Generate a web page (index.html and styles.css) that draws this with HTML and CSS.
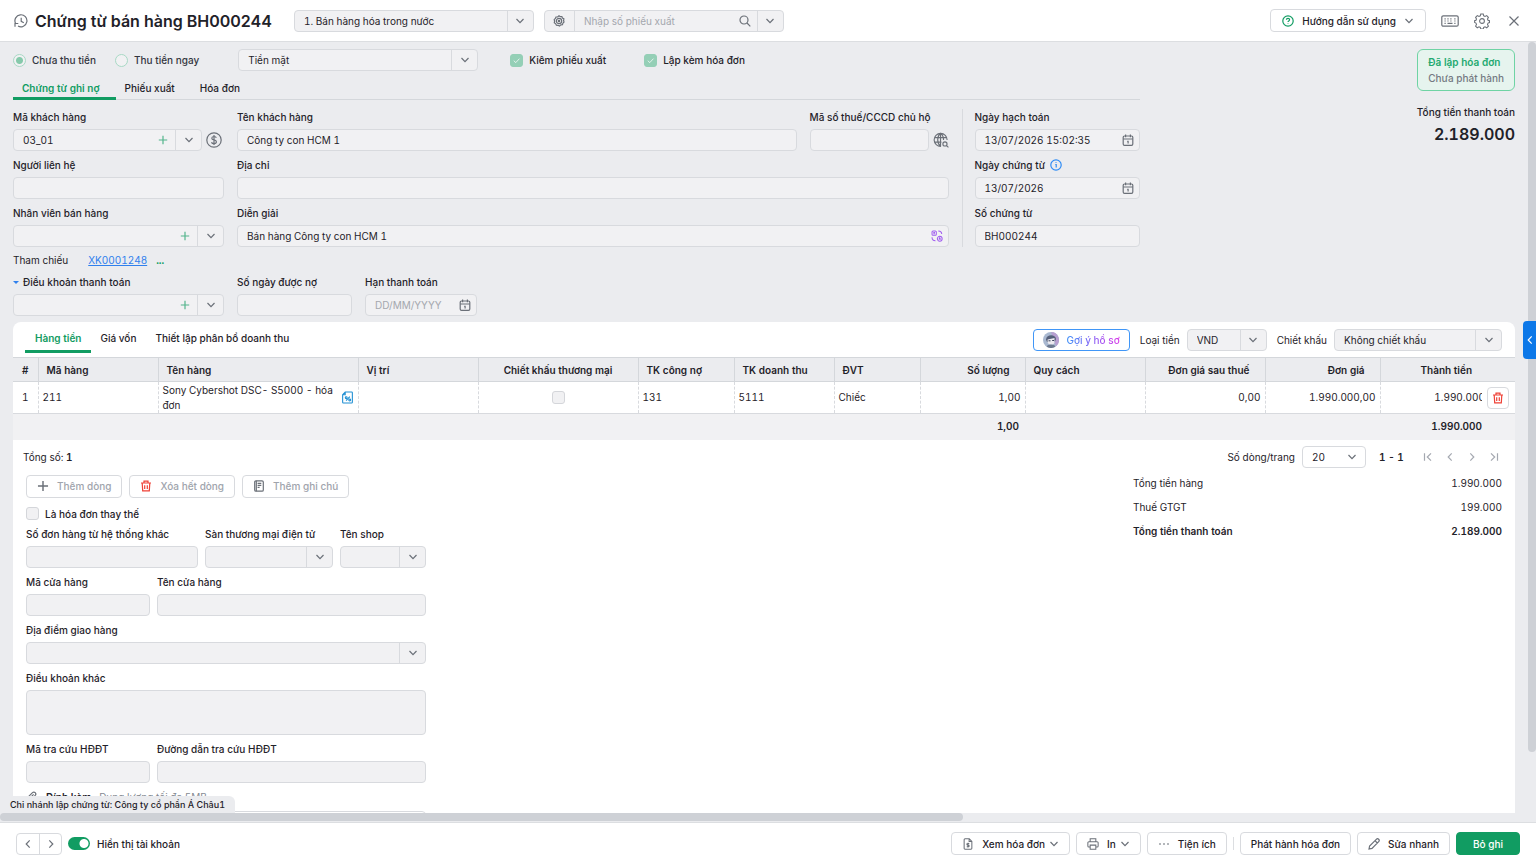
FILE: index.html
```html
<!DOCTYPE html>
<html lang="vi">
<head>
  <meta charset="UTF-8" />
  <meta name="viewport" content="width=device-width, initial-scale=1.0" />
  <title>Chứng từ bán hàng BH000244</title>
  <link rel="stylesheet" href="styles.css">
</head>
<body>
  <!-- icon sprite -->
  <svg class="sprite" aria-hidden="true">
    <symbol id="i-down" viewBox="0 0 10 10"><path d="M1.5 3 5 6.7 8.5 3"/></symbol>
    <symbol id="i-left" viewBox="0 0 10 10"><path d="M6.7 1.3 3.2 5l3.5 3.7"/></symbol>
    <symbol id="i-right" viewBox="0 0 10 10"><path d="M3.3 1.3 6.8 5 3.3 8.7"/></symbol>
    <symbol id="i-first" viewBox="0 0 10 10"><path d="M1.5 1.2v7.6M8 1.3 4.3 5 8 8.7"/></symbol>
    <symbol id="i-last" viewBox="0 0 10 10"><path d="M8.5 1.2v7.6M2 1.3 5.7 5 2 8.7"/></symbol>
    <symbol id="i-plus" viewBox="0 0 10 10"><path d="M5 .8v8.4M.8 5h8.4"/></symbol>
    <symbol id="i-close" viewBox="0 0 12 12"><path d="m1.5 1.5 9 9M10.5 1.5l-9 9"/></symbol>
    <symbol id="i-history" viewBox="0 0 14 14"><path d="M1.500 9.300A6 6 0 1 1 4 12M1 12.800V9.500h3.300M7.200 3.700v3.700l2.600 1.300M6 12.900a6 6 0 0 0 2.500-.1"/></symbol>
    <symbol id="i-gear" viewBox="0 0 18 18"><path d="M7.6 1.2h2.8l.5 2 1.5.7 1.9-1 1.9 1.9-1 1.9.6 1.5 1.6.5v2l-1.6.6-.6 1.5 1 1.9-1.9 1.9-1.9-1-1.5.7-.5 1.6H7.6l-.5-1.7-1.5-.6-1.9 1-1.9-1.9 1-1.9-.6-1.5-1.5-.6v-2l1.5-.5.6-1.5-1-1.9 1.9-1.9 1.9 1 1.5-.7z"/><circle cx="9" cy="9" r="2.7"/></symbol>
    <symbol id="i-gear-small" viewBox="0 0 12 12"><path d="M6 .8 7.300 1.700 8.900 1.600 9.500 3.100 10.900 3.900 10.600 5.500 11 7 9.900 8.200 9.400 9.700 7.800 9.900 6.500 11.100 5 10.300 3.400 10.200 2.700 8.800 1.300 7.800 1.600 6.200 1.200 4.700 2.400 3.500 3 2 4.600 1.900z"/><circle cx="6" cy="6" r="2.700"/><circle cx="6" cy="6" r=".7"/></symbol>
    <symbol id="i-search" viewBox="0 0 12 12"><circle cx="5" cy="5" r="4"/><path d="m8 8 3.3 3.3"/></symbol>
    <symbol id="i-help" viewBox="0 0 12 12"><circle cx="6" cy="6" r="5.2"/><path d="M4.4 4.8C4.4 3 7.6 3 7.6 4.8 7.6 6 6 5.900 6 7.100M6 8.400v.7"/></symbol>
    <symbol id="i-keyboard" viewBox="0 0 18 12"><rect x=".8" y=".8" width="16.400" height="10.400" rx="1.500"/><path d="M3.500 3.900h1.200M6.400 3.900h1.200M9.300 3.900h1.200M13.300 3.900h1.200M3.500 6h1.200M6.400 6h1.200M9.300 6h1.200M13.300 6h1.200M3.500 8.400h1.200M6.500 8.400h5M13.300 8.400h1.200"/></symbol>
    <symbol id="i-dollar" viewBox="0 0 16 16"><circle cx="8" cy="8" r="7.200"/><path d="M10.300 5.700C9.700 4 5.800 4 5.800 6.200c0 2.300 4.600 1.200 4.600 3.600 0 2.400-4.300 2.300-4.900.4M8 3v10"/></symbol>
    <symbol id="i-globe" viewBox="0 0 17 17"><path d="M8.500 15.200A6.900 6.900 0 1 1 15 8.500M1.500 6h13M1.500 10.800h7.500M8 1.300C4 4.500 4 12 8 15.200M8 1.300c2.500 2 3.300 4.700 3.200 7.200M8 1.300v14"/><circle cx="12.700" cy="12.700" r="2.200"/><path d="m14.400 14.400 2 2"/></symbol>
    <symbol id="i-calendar" viewBox="0 0 12 12"><rect x="1.200" y="2" width="9.600" height="9.300" rx="1.300"/><path d="M3.600.5v2.700M8.400.5v2.700M1.200 5h9.600M5.200 7.400h.9v2.200"/></symbol>
    <symbol id="i-info" viewBox="0 0 12 12"><circle cx="6" cy="6" r="5.2"/><path d="M5.300 5.500H6.200v3M6 3.200v.9"/></symbol>
    <symbol id="i-trash" viewBox="0 0 12 12"><path d="M1 3h10M4 3V1.200h4V3M2.200 3l.5 7.900h6.600l.5-7.900M4.700 5.200v3.700M7.300 5.200v3.700"/></symbol>
    <symbol id="i-note" viewBox="0 0 12 12"><rect x="1.700" y=".8" width="8.600" height="10.400" rx="1.300"/><path d="M4.600 3.300h3.700M4.600 5.300h3.700M4.600 7.300h2M3.300.8v10.400"/></symbol>
    <symbol id="i-tax" viewBox="0 0 12 14"><path d="M3.500 1h7a.8.8 0 0 1 .8.8v10.400a.8.800 0 0 1-.8.8h-9a.8.800 0 0 1-.8-.8V4zM3.500 1v3H.7"/><path d="m4.500 10.500 4-4.500"/><circle cx="4.600" cy="7.200" r="1"/><circle cx="8.400" cy="9.700" r="1"/></symbol>
    <symbol id="i-swap" viewBox="0 0 14 14"><rect x="1.200" y="1.200" width="5" height="5" rx="1.200"/><path d="M2.700 3h2M2.700 4.500h2M8.500 1.200c2.500 0 4 1.200 4 3.600M1.200 8.500c0 2.700 1.500 4 4 4"/><circle cx="10.200" cy="10.200" r="2.800"/><path d="M9.300 11.200 10.200 9l.9 2.200"/></symbol>
    <symbol id="i-invoice" viewBox="0 0 12 14"><path d="M1.500 2A1 1 0 0 1 2.500 1h5l3 3v8a1 1 0 0 1-1 1h-7a1 1 0 0 1-1-1zM7.300 1v3.200h3.200M7.500 6.400H5.600a.9.9 0 0 0 0 1.900h.8a.9.900 0 0 1 0 1.900H4.500M6 5.600v5.400"/></symbol>
    <symbol id="i-print" viewBox="0 0 14 14"><path d="M3.700 4.500V1h6.600v3.500M3.700 10.500H2.200a1.200 1.200 0 0 1-1.200-1.200V5.800A1.200 1.200 0 0 1 2.200 4.500h9.600A1.200 1.200 0 0 1 13 5.800v3.500a1.200 1.200 0 0 1-1.200 1.200h-1.500M3.700 8.300h6.600V13H3.700z"/></symbol>
    <symbol id="i-pencil" viewBox="0 0 12 12"><path d="M1 11l.6-3L8.300 1.300a1.600 1.600 0 0 1 2.400 2.300L4 10.400zM7 2.700 9.300 5"/></symbol>
    <symbol id="i-clip" viewBox="0 0 12 12"><path d="M10.800 5.300 6 10.200a2.800 2.800 0 0 1-4-4L6.500 1.700a1.900 1.900 0 0 1 2.700 2.700L4.900 8.700a.9.900 0 0 1-1.300-1.300l4-4"/></symbol>
    <symbol id="i-dots" viewBox="0 0 12 12"><path d="M1 6h2M5 6h2M9 6h2"/></symbol>
  </svg>

  <header class="topbar">
    <svg class="icon s14"><use href="#i-history"/></svg>
    <h1>Chứng từ bán hàng BH000244</h1>
    <div class="combo type-select">
      <select aria-label="Loại chứng từ"><option>1. Bán hàng hóa trong nước</option></select>
      <span class="arrow"><svg class="icon s10"><use href="#i-down"/></svg></span>
    </div>
    <div class="combo voucher-search">
      <button class="prefix" aria-label="Tùy chọn tìm"><svg class="icon s12"><use href="#i-gear-small"/></svg></button>
      <input type="text" placeholder="Nhập số phiếu xuất" aria-label="Số phiếu xuất">
      <button class="inner" aria-label="Tìm"><svg class="icon s12"><use href="#i-search"/></svg></button>
      <button class="arrow" aria-label="Mở"><svg class="icon s10"><use href="#i-down"/></svg></button>
    </div>
    <div class="topbar-right">
      <button class="btn help"><svg class="icon s12 green"><use href="#i-help"/></svg>Hướng dẫn sử dụng<svg class="icon s10"><use href="#i-down"/></svg></button>
      <button class="icon-btn" aria-label="Phím tắt"><svg class="icon keyboard"><use href="#i-keyboard"/></svg></button>
      <button class="icon-btn" aria-label="Thiết lập"><svg class="icon s16"><use href="#i-gear"/></svg></button>
      <button class="icon-btn close" aria-label="Đóng"><svg class="icon s12"><use href="#i-close"/></svg></button>
    </div>
  </header>

  <main class="workspace">
    <div class="content">
      <div class="voucher">
        <div class="voucher-form">
          <div class="options">
            <label class="check"><input type="radio" name="pay" checked>Chưa thu tiền</label>
            <label class="check"><input type="radio" name="pay">Thu tiền ngay</label>
            <div class="combo pay-method">
              <select aria-label="Phương thức"><option>Tiền mặt</option></select>
              <span class="arrow"><svg class="icon s10"><use href="#i-down"/></svg></span>
            </div>
            <label class="check strong"><input type="checkbox" checked>Kiêm phiếu xuất</label>
            <label class="check strong"><input type="checkbox" checked>Lập kèm hóa đơn</label>
          </div>

          <nav class="tabs">
            <button class="tab active">Chứng từ ghi nợ</button>
            <button class="tab">Phiếu xuất</button>
            <button class="tab">Hóa đơn</button>
          </nav>

          <div class="fields">
            <div class="fields-main">
              <div class="field">
                <label for="customer-code">Mã khách hàng</label>
                <div class="with-icon">
                  <div class="combo">
                    <input id="customer-code" type="text" value="03_01">
                    <button class="inner" aria-label="Thêm khách hàng"><svg class="icon s10 green soft"><use href="#i-plus"/></svg></button>
                    <button class="arrow" aria-label="Chọn"><svg class="icon s10"><use href="#i-down"/></svg></button>
                  </div>
                  <button class="icon-btn debt" aria-label="Công nợ"><svg class="icon s16"><use href="#i-dollar"/></svg></button>
                </div>
              </div>
              <div class="customer-row">
                <div class="field">
                  <label for="customer-name">Tên khách hàng</label>
                  <div class="combo"><input id="customer-name" type="text" value="Công ty con HCM 1"></div>
                </div>
                <div class="field">
                  <label for="tax-code">Mã số thuế/CCCD chủ hộ</label>
                  <div class="with-icon">
                    <div class="combo"><input id="tax-code" type="text"></div>
                    <button class="icon-btn" aria-label="Tra cứu"><svg class="icon s16"><use href="#i-globe"/></svg></button>
                  </div>
                </div>
              </div>
              <div class="field">
                <label for="contact">Người liên hệ</label>
                <div class="combo"><input id="contact" type="text"></div>
              </div>
              <div class="field">
                <label for="address">Địa chỉ</label>
                <div class="combo"><input id="address" type="text"></div>
              </div>
              <div class="field">
                <label for="seller">Nhân viên bán hàng</label>
                <div class="combo">
                  <input id="seller" type="text">
                  <button class="inner" aria-label="Thêm nhân viên"><svg class="icon s10 green soft"><use href="#i-plus"/></svg></button>
                  <button class="arrow" aria-label="Chọn"><svg class="icon s10"><use href="#i-down"/></svg></button>
                </div>
              </div>
              <div class="field">
                <label for="memo">Diễn giải</label>
                <div class="combo">
                  <input id="memo" type="text" value="Bán hàng Công ty con HCM 1">
                  <button class="inner tight" aria-label="Gợi ý diễn giải"><svg class="icon s12 purple"><use href="#i-swap"/></svg></button>
                </div>
              </div>
            </div>
            <div class="fields-date">
              <div class="field">
                <label for="posted">Ngày hạch toán</label>
                <div class="combo"><input id="posted" type="text" value="13/07/2026 15:02:35"><button class="inner tight" aria-label="Lịch"><svg class="icon s12"><use href="#i-calendar"/></svg></button></div>
              </div>
              <div class="field">
                <label for="dated">Ngày chứng từ <svg class="icon s12 blue"><use href="#i-info"/></svg></label>
                <div class="combo"><input id="dated" type="text" value="13/07/2026"><button class="inner tight" aria-label="Lịch"><svg class="icon s12"><use href="#i-calendar"/></svg></button></div>
              </div>
              <div class="field">
                <label for="number">Số chứng từ</label>
                <div class="combo"><input id="number" type="text" value="BH000244"></div>
              </div>
            </div>
          </div>

          <div class="reference">
            <span>Tham chiếu</span>
            <a href="#">XK0001248</a>
            <button class="more" aria-label="Thêm tham chiếu">...</button>
          </div>

          <div class="terms">
            <div class="field">
              <label for="term" class="term-label">Điều khoản thanh toán</label>
              <div class="combo">
                <input id="term" type="text">
                <button class="inner" aria-label="Thêm điều khoản"><svg class="icon s10 green soft"><use href="#i-plus"/></svg></button>
                <button class="arrow" aria-label="Chọn"><svg class="icon s10"><use href="#i-down"/></svg></button>
              </div>
            </div>
            <div class="field">
              <label for="days">Số ngày được nợ</label>
              <div class="combo"><input id="days" type="text"></div>
            </div>
            <div class="field">
              <label for="due">Hạn thanh toán</label>
              <div class="combo"><input id="due" type="text" placeholder="DD/MM/YYYY"><button class="inner tight" aria-label="Lịch"><svg class="icon s12"><use href="#i-calendar"/></svg></button></div>
            </div>
          </div>
        </div>

        <aside class="summary">
          <div class="status"><strong>Đã lập hóa đơn</strong><span>Chưa phát hành</span></div>
          <p>Tổng tiền thanh toán</p>
          <strong class="grand">2.189.000</strong>
        </aside>
      </div>

      <section class="panel">
        <div class="panel-bar">
          <nav class="panel-tabs">
            <button class="tab active">Hàng tiền</button>
            <button class="tab">Giá vốn</button>
            <button class="tab">Thiết lập phân bổ doanh thu</button>
          </nav>
          <button class="suggest">
            <svg class="avatar" viewBox="0 0 16 16"><circle cx="8" cy="8" r="8" fill="#a9b8d0"/><path d="M8 0a8 8 0 0 1 5 14.200z" fill="#b79fd0"/><path d="M3 7.500C3.500 2 12.500 2 13 7l-1 2.500-8 .5z" fill="#56607a"/><path d="M4.600 7.500 11.500 6v4c0 3.500-6.500 3.500-6.900 0z" fill="#eceaf0"/><path d="M5.500 8.800h2M9.200 8.500h1.800" stroke="#39425c"/><path d="M3.500 14.500c1-2.800 8-2.800 9 0a8 8 0 0 1-9 0z" fill="#6d7a90"/></svg>
            <span>Gợi ý hồ sơ</span>
          </button>
          <label for="currency">Loại tiền</label>
          <div class="combo currency">
            <select id="currency"><option>VND</option></select>
            <span class="arrow"><svg class="icon s10"><use href="#i-down"/></svg></span>
          </div>
          <label for="discount">Chiết khấu</label>
          <div class="combo discount">
            <select id="discount"><option>Không chiết khấu</option></select>
            <span class="arrow"><svg class="icon s10"><use href="#i-down"/></svg></span>
          </div>
        </div>

        <table class="items">
          <colgroup>
            <col class="w-no"><col class="w-120"><col class="w-name"><col class="w-120"><col class="w-check"><col class="w-debt"><col class="w-rev"><col class="w-unit"><col class="w-qty"><col class="w-120"><col class="w-120"><col class="w-price"><col class="w-amount"><col class="w-act">
          </colgroup>
          <thead>
            <tr>
              <th class="center">#</th><th>Mã hàng</th><th>Tên hàng</th><th>Vị trí</th><th class="center">Chiết khấu thương mại</th><th>TK công nợ</th><th>TK doanh thu</th><th>ĐVT</th><th class="num">Số lượng</th><th>Quy cách</th><th class="num">Đơn giá sau thuế</th><th class="num">Đơn giá</th><th class="num amount">Thành tiền</th><th></th>
            </tr>
          </thead>
          <tbody>
            <tr>
              <td class="center">1</td>
              <td>211</td>
              <td><div class="item-name"><span>Sony Cybershot DSC- S5000 - hóa đơn</span><svg class="icon tax"><use href="#i-tax"/></svg></div></td>
              <td></td>
              <td class="center"><input type="checkbox" aria-label="Chiết khấu thương mại"></td>
              <td>131</td>
              <td>5111</td>
              <td>Chiếc</td>
              <td class="num">1,00</td>
              <td></td>
              <td class="num">0,00</td>
              <td class="num">1.990.000,00</td>
              <td class="num amount"><div>1.990.000</div></td>
              <td class="act"><button class="btn delete" aria-label="Xóa dòng"><svg class="icon s12 red"><use href="#i-trash"/></svg></button></td>
            </tr>
          </tbody>
          <tfoot>
            <tr>
              <td colspan="9" class="num">1,00</td>
              <td colspan="4" class="num total">1.990.000</td>
              <td></td>
            </tr>
          </tfoot>
        </table>

        <div class="pager">
          <span class="count">Tổng số: <b>1</b></span>
          <label for="page-size">Số dòng/trang</label>
          <div class="combo page-size">
            <select id="page-size"><option>20</option></select>
            <span class="arrow"><svg class="icon s10"><use href="#i-down"/></svg></span>
          </div>
          <b class="range">1 - 1</b>
          <div class="pager-nav">
            <button class="icon-btn" aria-label="Trang đầu"><svg class="icon s10"><use href="#i-first"/></svg></button>
            <button class="icon-btn" aria-label="Trang trước"><svg class="icon s10"><use href="#i-left"/></svg></button>
            <button class="icon-btn" aria-label="Trang sau"><svg class="icon s10"><use href="#i-right"/></svg></button>
            <button class="icon-btn" aria-label="Trang cuối"><svg class="icon s10"><use href="#i-last"/></svg></button>
          </div>
        </div>

        <div class="details">
          <div class="extra">
            <div class="row-actions">
              <button class="btn muted"><svg class="icon s12"><use href="#i-plus"/></svg>Thêm dòng</button>
              <button class="btn muted"><svg class="icon s12 red"><use href="#i-trash"/></svg>Xóa hết dòng</button>
              <button class="btn muted"><svg class="icon s12"><use href="#i-note"/></svg>Thêm ghi chú</button>
            </div>
            <label class="check strong replace"><input type="checkbox">Là hóa đơn thay thế</label>
            <div class="row three">
              <div class="field">
                <label for="order-no">Số đơn hàng từ hệ thống khác</label>
                <div class="combo"><input id="order-no" type="text"></div>
              </div>
              <div class="field">
                <label for="market">Sàn thương mại điện tử</label>
                <div class="combo"><select id="market"><option></option></select><span class="arrow"><svg class="icon s10"><use href="#i-down"/></svg></span></div>
              </div>
              <div class="field">
                <label for="shop">Tên shop</label>
                <div class="combo"><select id="shop"><option></option></select><span class="arrow"><svg class="icon s10"><use href="#i-down"/></svg></span></div>
              </div>
            </div>
            <div class="row two">
              <div class="field">
                <label for="store-code">Mã cửa hàng</label>
                <div class="combo"><input id="store-code" type="text"></div>
              </div>
              <div class="field">
                <label for="store-name">Tên cửa hàng</label>
                <div class="combo"><input id="store-name" type="text"></div>
              </div>
            </div>
            <div class="field">
              <label for="place">Địa điểm giao hàng</label>
              <div class="combo"><select id="place"><option></option></select><span class="arrow"><svg class="icon s10"><use href="#i-down"/></svg></span></div>
            </div>
            <div class="field">
              <label for="other">Điều khoản khác</label>
              <textarea id="other"></textarea>
            </div>
            <div class="row two">
              <div class="field">
                <label for="lookup">Mã tra cứu HĐĐT</label>
                <div class="combo"><input id="lookup" type="text"></div>
              </div>
              <div class="field">
                <label for="lookup-url">Đường dẫn tra cứu HĐĐT</label>
                <div class="combo"><input id="lookup-url" type="text"></div>
              </div>
            </div>
            <div class="attach"><svg class="icon s12"><use href="#i-clip"/></svg><b>Đính kèm</b><span>Dung lượng tối đa 5MB</span></div>
            <div class="dropzone"></div>
          </div>
          <dl class="totals">
            <div><dt>Tổng tiền hàng</dt><dd>1.990.000</dd></div>
            <div><dt>Thuế GTGT</dt><dd>199.000</dd></div>
            <div class="bold"><dt>Tổng tiền thanh toán</dt><dd>2.189.000</dd></div>
          </dl>
        </div>
      </section>
    </div>
    <div class="vbar"><div class="thumb"></div></div>
    <div class="hbar"><div class="thumb"></div></div>
    <div class="branch">Chi nhánh lập chứng từ: Công ty cổ phần Á Châu1</div>
    <button class="drawer" aria-label="Mở bảng bên"><svg class="icon s10"><use href="#i-left"/></svg></button>
  </main>

  <footer class="actions">
    <div class="prev-next">
      <button aria-label="Trước"><svg class="icon s10"><use href="#i-left"/></svg></button>
      <button aria-label="Sau"><svg class="icon s10"><use href="#i-right"/></svg></button>
    </div>
    <label class="toggle"><input type="checkbox" checked>Hiển thị tài khoản</label>
    <div class="action-buttons">
      <button class="btn"><svg class="icon s12"><use href="#i-invoice"/></svg>Xem hóa đơn<svg class="icon s10 caret"><use href="#i-down"/></svg></button>
      <button class="btn"><svg class="icon s12"><use href="#i-print"/></svg>In<svg class="icon s10 caret"><use href="#i-down"/></svg></button>
      <button class="btn"><svg class="icon s12"><use href="#i-dots"/></svg>Tiện ích</button>
      <span class="sep"></span>
      <button class="btn">Phát hành hóa đơn</button>
      <button class="btn"><svg class="icon s12"><use href="#i-pencil"/></svg>Sửa nhanh</button>
      <button class="btn primary">Bỏ ghi</button>
    </div>
  </footer>
</body>
</html>
```
FILE: styles.css
```css
* { box-sizing: border-box; }
html, body { height: 100%; }
body { margin: 0; display: flex; flex-direction: column; overflow: hidden; font: 10px/16px Inter, "Open Sans", sans-serif; font-variant-numeric: tabular-nums; color: #1f2229; background: #fff; }
button, input, select, textarea { font: inherit; font-variant-numeric: inherit; color: inherit; margin: 0; }
button { border: 0; background: none; padding: 0; cursor: pointer; }
h1, p, dl, dd { margin: 0; }
b, strong { font-weight: 600; }

.sprite { position: absolute; width: 0; height: 0; }
.icon { flex: none; display: block; fill: none; stroke: #6b7078; stroke-width: 1.2; }
.s10 { width: 10px; height: 10px; }
.s12 { width: 12px; height: 12px; }
.s14 { width: 14px; height: 14px; }
.s16 { width: 16px; height: 16px; }
.green { stroke: #119c62; }
.soft { opacity: .7; }
.blue { stroke: #2f8cf5; }
.red { stroke: #ef4136; }
.purple { stroke: #a05cf0; }
.keyboard { width: 18px; height: 12px; }
.icon-btn { display: flex; align-items: center; }

/* top bar */
.topbar { display: flex; align-items: center; height: 42px; flex: none; padding: 0 16px 0 14px; border-bottom: 1px solid #dcdee1; }
.topbar h1 { margin: 0 22px 0 7px; font-size: 16px; line-height: 22px; font-weight: 600; font-variant-numeric: normal; white-space: nowrap; }
.type-select { width: 240px; margin-right: 10px; }
.voucher-search { width: 240px; }
.topbar-right { display: flex; align-items: center; gap: 15px; margin-left: auto; }
.close { margin-left: 3px; }
.btn.help { padding: 0 11px; }

/* inputs */
.combo { display: flex; height: 22px; background: #f1f1f3; border: 1px solid #d8dade; border-radius: 4px; overflow: hidden; }
.combo input, .combo select { flex: 1; min-width: 0; width: 0; border: 0; outline: 0; background: transparent; padding: 0 9px; appearance: none; }
.combo ::placeholder { color: #a4a7ae; opacity: 1; }
.combo .arrow { display: flex; align-items: center; justify-content: center; width: 26px; flex: none; border-left: 1px solid #d8dade; pointer-events: none; }
.combo .prefix { display: flex; align-items: center; justify-content: center; width: 30px; border-right: 1px solid #d8dade; }
.combo .inner { display: flex; align-items: center; justify-content: center; width: 24px; }
.combo .tight { width: 22px; }
.field { display: flex; flex-direction: column; gap: 4px; min-width: 0; }
.field label { display: flex; align-items: center; gap: 5px; height: 16px; font-weight: 500; white-space: nowrap; }
.btn { display: flex; align-items: center; justify-content: center; gap: 8px; height: 23px; padding: 0 10px; border: 1px solid #d8dade; border-radius: 4px; background: #fff; font-weight: 500; white-space: nowrap; }

input[type=checkbox], input[type=radio] { appearance: none; width: 13px; height: 13px; flex: none; border: 1px solid #d4d6da; border-radius: 3px; background: #f1f1f3; }
input[type=checkbox]:checked { border-color: #94cfb6; background: #94cfb6 url("data:image/svg+xml,%3Csvg xmlns='http://www.w3.org/2000/svg' viewBox='0 0 12 12'%3E%3Cpath d='M3 6.200 5.200 8.300 9.200 4' fill='none' stroke='white' stroke-opacity='.8'/%3E%3C/svg%3E"); }
input[type=radio] { border-radius: 50%; border-color: #a8d9c5; }
input[type=radio]:checked { background: radial-gradient(#86c9ab 3px, #f1f1f3 4px); }
.check { display: flex; align-items: center; gap: 6px; font-weight: 500; white-space: nowrap; color: #33363e; }
.strong { color: inherit; }

/* workspace */
.workspace { position: relative; flex: 1; min-height: 0; display: grid; grid-template: minmax(0, 1fr) 9px / minmax(0, 1fr) 8px; background: #ebecef; }
.content { overflow: hidden; padding: 7px 13px 0; }
.vbar { grid-row: 1 / 3; grid-column: 2; }
.vbar .thumb { height: 91%; border-radius: 4px; background: #ced1d6; }
.hbar { grid-row: 2; grid-column: 1; }
.hbar .thumb { width: 63%; height: 8px; border-radius: 4px; background: #ced1d6; }
.voucher { display: flex; justify-content: space-between; align-items: flex-start; }
.voucher-form { width: 75%; }

.options { display: flex; align-items: center; height: 22px; }
.options .check + .check { margin-left: 19px; }
.options .pay-method { width: 240px; margin: 0 32px 0 39px; }
.options .strong + .strong { margin-left: 38px; }

.tabs { display: flex; height: 23px; margin-top: 6px; border-bottom: 1px solid #d4d7db; }
.tab { border-bottom: 3px solid transparent; font-weight: 500; white-space: nowrap; }
.tab.active { color: #119c62; border-bottom-color: #119c62; font-weight: 600; }
.tabs .tab { padding: 1px 16px 0 9px; height: 23px; }

.fields { display: flex; margin-top: 9px; }
.fields-main { flex: 1; min-width: 0; display: grid; grid-template-columns: 211px minmax(0, 1fr); gap: 6px 13px; padding-right: 13px; border-right: 1px solid #d8dade; }
.customer-row { display: grid; grid-template-columns: minmax(0, 1fr) 139px; gap: 13px; }
.fields-date { flex: none; width: 177px; padding-left: 12px; display: grid; gap: 6px; }
.with-icon { display: flex; gap: 4px; }
.with-icon .combo { flex: 1; min-width: 0; }
.debt { padding-right: 2px; }
.reference { display: flex; align-items: center; height: 16px; margin-top: 5px; }
.reference a { margin: 0 9px 0 20px; color: #2f80ed; }
.reference .more { color: #119c62; font-weight: 700; }
.terms { display: grid; grid-template-columns: 211px 115px 112px; gap: 13px; margin: 6px 0; }
.field .term-label::before { content: ""; border: 3px solid transparent; border-top-color: #2f80ed; border-bottom: 0; }
.field .term-label { gap: 4px; }

.summary { display: flex; flex-direction: column; align-items: flex-end; }
.status { display: flex; flex-direction: column; padding: 4px 10px; border: 1px solid #6fd3a4; border-radius: 6px; background: #e6f4ee; margin-bottom: 13px; }
.status strong { color: #23a970; }
.status span { color: #747982; font-weight: 500; }
.summary p { font-weight: 500; }
.grand { font-size: 16px; line-height: 28px; }

/* items panel */
.panel { background: #fff; border-radius: 8px 8px 0 0; }
.panel-bar { display: flex; align-items: center; height: 35px; padding: 0 13px 0 12px; }
.panel-tabs { display: flex; align-self: stretch; margin-right: auto; padding-bottom: 4px; }
.panel-tabs .tab { padding: 4px 10px 0 9px; }
.panel-tabs .active { padding-left: 10px; }
.suggest { display: flex; align-items: center; gap: 7px; height: 22px; padding: 0 9px; border: 1px solid #4096f7; border-radius: 4px; font-weight: 500; }
.suggest span { color: transparent; background: linear-gradient(90deg, #388ef7, #8a62f5 50%, #d936e8); background-clip: text; }
.avatar { width: 16px; height: 16px; }
.panel-bar label { margin: 0 7px 0 10px; }
.currency { width: 80px; }
.discount { width: 168px; }

.items { width: 100%; table-layout: fixed; border-collapse: collapse; }
.w-no { width: 25px; }
.w-120 { width: 120px; }
.w-name { width: 200px; }
.w-check { width: 160px; }
.w-debt { width: 96px; }
.w-rev { width: 100px; }
.w-unit { width: 86px; }
.w-qty { width: 105px; }
.w-price { width: 115px; }
.w-act { width: 33px; }
.items th { height: 24px; padding: 0 8px; text-align: left; font-weight: 600; white-space: nowrap; background: #ebecef; border: solid #d4d7db; border-width: 1px 1px 1px 0; }
.items td { height: 32px; padding: 0 4px; line-height: 15px; }
.items tbody td { border-right: 1px dashed #d8dade; border-bottom: 1px solid #d8dade; }
.items .center { text-align: center; }
.items td.center { padding: 0; }
.items th.center { padding: 0; }
.items input { display: block; margin: 0 auto; }
.items .num { text-align: right; }
.items th.num { padding-right: 15px; }
.items th.amount { padding-right: 10px; }
.items th.amount, .items tbody td.amount, .items th:last-child, .items tbody td:last-child { border-right: 0; }
.items td.amount { padding-right: 0; overflow: hidden; }
.items td.amount div { margin-right: -3px; }
.items tfoot td { height: 26px; padding-right: 6px; background: #f1f1f3; font-weight: 600; }
.items tfoot td.total { padding-right: 0; }
.item-name { display: flex; align-items: center; justify-content: space-between; }
.tax { width: 11px; height: 13px; margin-right: 1px; stroke: #2190d4; }
.items td.act { padding: 0 0 0 5px; }
.delete { width: 22px; height: 22px; padding: 0; }

.pager { display: flex; align-items: center; height: 35px; padding: 0 16px 0 10px; }
.count { margin-right: auto; }
.page-size { width: 64px; margin: 0 13px 0 7px; background: #fff; }
.page-size .arrow { border: 0; }
.range { min-width: 25px; }
.pager-nav { display: flex; gap: 12px; margin-left: 19px; }
.pager-nav .icon { stroke: #a4a8b0; }

.details { display: flex; justify-content: space-between; align-items: flex-start; padding: 0 13px; }
.extra { display: flex; flex-direction: column; gap: 6px; width: 400px; }
.row-actions { display: flex; gap: 7px; }
.muted { color: #a0a4ac; }
.replace { height: 16px; margin: 2px 0 -2px; }
.row { display: grid; gap: 7px; }
.three { grid-template-columns: 172px 128px 86px; }
.two { grid-template-columns: 124px 269px; }
textarea { height: 45px; resize: none; background: #f1f1f3; border: 1px solid #d8dade; border-radius: 4px; }
.attach { display: flex; align-items: center; gap: 8px; height: 16px; }
.attach span { color: #858a93; }
.dropzone { height: 60px; border: 1px solid #d8dade; border-radius: 4px; }
.totals { width: 369px; }
.totals div { display: flex; justify-content: space-between; margin-bottom: 8px; }
.totals .bold { font-weight: 600; }

.branch { position: absolute; left: 0; bottom: 9px; padding: 0 10px; line-height: 17px; font-size: 9px; font-weight: 500; background: #ebecef; border-top-right-radius: 6px; }
.drawer { position: absolute; right: 0; top: 279px; width: 13px; height: 38px; display: flex; align-items: center; justify-content: center; background: #0c78e8; border-radius: 4px 0 0 4px; }
.drawer .icon { stroke: #fff; }

/* bottom bar */
.actions { display: flex; align-items: center; height: 42px; flex: none; padding: 0 16px; border-top: 1px solid #dcdee1; }
.prev-next { display: flex; border: 1px solid #d8dade; border-radius: 4px; }
.prev-next button { display: flex; align-items: center; justify-content: center; width: 22px; height: 20px; }
.prev-next button + button { border-left: 1px solid #d8dade; }
.toggle { display: flex; align-items: center; gap: 7px; margin-left: 6px; font-weight: 500; }
.toggle input:checked { width: 22px; border: 0; border-radius: 7px; background: radial-gradient(circle at 16px 50%, #fff 4px, #119c62 5px); }
.action-buttons { display: flex; align-items: center; gap: 6px; margin-left: auto; }
.caret { margin-left: -4px; }
.sep { width: 1px; height: 13px; background: #dcdee1; }
.primary { background: #119c62; border-color: #119c62; color: #fff; padding: 0 16px; }
```
